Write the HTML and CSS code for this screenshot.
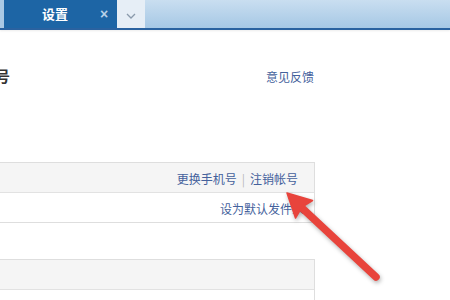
FILE: index.html
```html
<!DOCTYPE html>
<html lang="zh-CN">
<head>
    <meta charset="UTF-8">
    <title>设置</title>
    <link rel="stylesheet" href="styles.css">
</head>
<body>
    <div class="tabbar">
        <div class="tab-edge"></div>
        <div class="tab">
            <span class="tab-title">设置</span>
            <span class="tab-close">×</span>
        </div>
        <div class="tab-more">
            <svg width="10" height="6" viewBox="0 0 10 6"><polyline points="1,1 5,5 9,1" fill="none" stroke="#8a9aab" stroke-width="1.3"/></svg>
        </div>
    </div>
    <div class="content">
        <div class="title-row">
            <h2 class="page-title">帐号</h2>
            <a class="link" href="#">意见反馈</a>
        </div>
        <div class="panel">
            <div class="row row-gray">
                <a class="link" href="#">更换手机号</a><span class="sep">|</span><a class="link" href="#">注销帐号</a>
            </div>
            <div class="row row-second">
                <a class="link" href="#">设为默认发件人</a>
            </div>
        </div>
        <div class="panel panel-next">
            <div class="row row-gray"></div>
            <div class="row"></div>
        </div>
    </div>
    <svg class="arrow" width="104" height="100" viewBox="0 0 104 100">
        <line x1="22" y1="20" x2="96" y2="89" stroke="#e8443c" stroke-width="7.5" stroke-linecap="round"/>
        <polygon points="7,5 32.5,12.5 22,19 15.5,30" fill="#e8443c" stroke="#e8443c" stroke-width="1.5" stroke-linejoin="round"/>
    </svg>
</body>
</html>
```
FILE: styles.css
```css
body {
    margin: 0;
    font-family: "Noto Sans CJK SC", "Noto Sans", sans-serif;
    background-color: #fff;
    overflow: hidden;
}
.tabbar {
    display: flex;
    height: 28px;
    background: linear-gradient(180deg, #c9def0 0%, #a6c8e5 100%);
    border-bottom: 2px solid #2a62a0;
    box-shadow: 0 1px 2px rgba(0, 0, 0, 0.08);
}
.tab-edge {
    width: 4px;
    background-color: #a9c9e5;
}
.tab {
    width: 113px;
    flex-shrink: 0;
    background-color: #1d65a5;
    display: flex;
    align-items: center;
    color: #fff;
    white-space: nowrap;
}
.tab-title {
    width: 28px;
    margin-left: 38px;
    font-size: 13px;
    font-weight: bold;
    line-height: 28px;
}
.tab-close {
    margin-left: 30px;
    font-family: "Liberation Sans", sans-serif;
    font-size: 14px;
    font-weight: bold;
    color: #b6d0e8;
    line-height: 28px;
}
.tab-more {
    width: 28px;
    flex-shrink: 0;
    background-color: #e6eef6;
    display: flex;
    align-items: center;
    justify-content: center;
    padding-top: 3px;
    box-sizing: border-box;
}
.content {
    margin-left: -20px;
    width: 335px;
}
.title-row {
    display: flex;
    justify-content: space-between;
    align-items: center;
    margin-top: 36px;
    height: 20px;
    padding-right: 1px;
}
.page-title {
    margin: 0;
    font-size: 15px;
    font-weight: bold;
    color: #333;
    line-height: 20px;
    white-space: nowrap;
}
.link {
    font-size: 12px;
    color: #44619c;
    text-decoration: none;
    white-space: nowrap;
}
.panel {
    margin-top: 76px;
    border: 1px solid #dedede;
}
.panel-next {
    margin-top: 36px;
    border-bottom: none;
}
.row {
    height: 29px;
    line-height: 29px;
    text-align: right;
    padding-right: 16px;
    border-bottom: 1px solid #e2e2e2;
}
.row:last-child {
    border-bottom: none;
}
.row-gray {
    background-color: #f5f5f5;
}
.row-second {
    padding-right: 10px;
}
.sep {
    margin: 0 5px;
    font-size: 12px;
    color: #b8b8b8;
}
.arrow {
    position: absolute;
    left: 280px;
    top: 188px;
    filter: drop-shadow(1px 2px 2px rgba(0, 0, 0, 0.3));
}
```
